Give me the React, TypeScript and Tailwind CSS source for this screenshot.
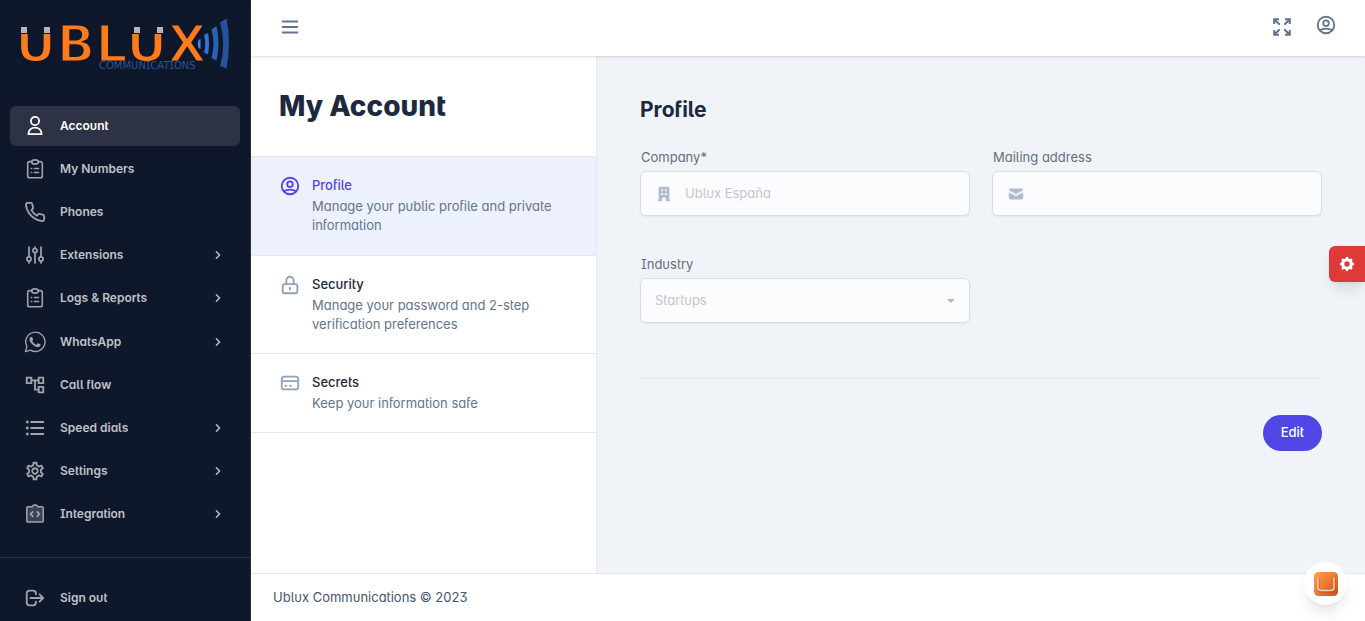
import React from 'react';
import {
    HiChevronRight,
    HiCog,
    HiMail,
    HiOfficeBuilding,
    HiOutlineCreditCard,
    HiOutlineLockClosed,
    HiOutlineLogout,
    HiOutlineMenu,
    HiOutlineUserCircle,
} from 'react-icons/hi';
import { MdOutlineAccountTree, MdOutlineSettings } from 'react-icons/md';
import { FiPhone } from 'react-icons/fi';

type IconType = React.ComponentType<{ className?: string }>;

interface NavItem {
    label: string;
    icon: IconType;
    hasChildren?: boolean;
    active?: boolean;
}

interface Section {
    title: string;
    description: string;
    icon: IconType;
    active?: boolean;
}

const PersonIcon: IconType = ({ className }) => <svg className={className} viewBox="0 0 22 22" fill="none" stroke="currentColor" strokeWidth="1.8" strokeLinejoin="round"><circle cx="11" cy="6" r="4.1" /><path d="M4.4 19.2c0-4.2 2.8-6.6 6.6-6.6s6.6 2.4 6.6 6.6z" /></svg>;
const ClipboardIcon: IconType = ({ className }) => <svg className={className} viewBox="0 0 22 22" fill="none" stroke="currentColor" strokeWidth="1.6" strokeLinecap="round" strokeLinejoin="round"><path d="M7.7 3.6H5.6a1.9 1.9 0 0 0-1.9 1.9v12.4a1.9 1.9 0 0 0 1.9 1.9h10.8a1.9 1.9 0 0 0 1.9-1.9V5.5a1.9 1.9 0 0 0-1.9-1.9h-2.1" /><ellipse cx="11" cy="4" rx="3.3" ry="2.1" /><path d="M10.5 10.5h4M10.5 14.5h4M7.3 10.5h.4M7.3 14.5h.4" /></svg>;
const SlidersIcon: IconType = ({ className }) => <svg className={className} viewBox="0 0 22 22" fill="none" stroke="currentColor" strokeWidth="1.7" strokeLinecap="round"><path d="M5 3v9.8M5 17v2M11 3v1.5M11 8.7V19M17 3v9.8M17 17v2" /><circle cx="5" cy="14.9" r="2.1" /><circle cx="11" cy="6.6" r="2.1" /><circle cx="17" cy="14.9" r="2.1" /></svg>;
const ListIcon: IconType = ({ className }) => <svg className={className} viewBox="0 0 22 22" fill="none" stroke="currentColor" strokeWidth="1.8"><path d="M6.5 5H20M6.5 11H20M6.5 17H20" /><path d="M2 5h2.6M2 11h2.6M2 17h2.6" strokeWidth="2.4" /></svg>;
const IntegrationIcon: IconType = ({ className }) => <svg className={className} viewBox="0 0 22 22" fill="none" stroke="currentColor" strokeWidth="1.5"><path d="M4 3.7h4.3a2.8 2.8 0 0 1 5.4 0H18a1.2 1.2 0 0 1 1.2 1.2v13a1.2 1.2 0 0 1-1.2 1.2H4a1.2 1.2 0 0 1-1.2-1.2v-13A1.2 1.2 0 0 1 4 3.7z" fill="currentColor" fillOpacity="0.3" /><path d="M9.3 8.3 6.5 11.1l2.8 2.8M12.7 8.3l2.8 2.8-2.8 2.8" strokeWidth="1.7" /></svg>;
const ExpandIcon: IconType = ({ className }) => <svg className={className} viewBox="0 0 18 18" fill="none" stroke="currentColor" strokeWidth="2"><path d="M1.2 6V1.2H6M1.5 1.5l5.2 5.2M12 1.2h4.8V6M16.5 1.5l-5.2 5.2M1.2 12v4.8H6M1.5 16.5l5.2-5.2M12 16.8h4.8V12M16.5 16.5l-5.2-5.2" /></svg>;
const WhatsAppIcon: IconType = ({ className }) => (
    <svg className={className} viewBox="0 0 16 16" fill="currentColor">
        <path d="M1 15l1.1-3.8A7 7 0 1 1 4.7 13.900z" fill="none" stroke="currentColor" strokeLinejoin="round" />
        <path d="M11.6 9.6c-.198-.1-1.17-.578-1.353-.646-.182-.065-.315-.099-.445.099-.133.197-.513.646-.627.775-.114.133-.232.148-.43.05-.197-.1-.836-.308-1.592-.985-.59-.525-.985-1.175-1.103-1.372-.114-.198-.011-.304.088-.403.087-.088.197-.232.296-.346.1-.114.133-.198.198-.33.065-.134.034-.248-.015-.347-.05-.099-.445-1.076-.612-1.47-.16-.389-.323-.335-.445-.34-.114-.007-.247-.007-.38-.007a.73.73 0 0 0-.529.247c-.182.198-.691.677-.691 1.654s.71 1.916.81 2.049c.098.133 1.394 2.132 3.383 2.992.47.205.84.326 1.129.418.475.152.904.129 1.246.08.38-.058 1.171-.48 1.338-.943.164-.464.164-.86.114-.943-.049-.084-.182-.133-.38-.232z" />
    </svg>
);

const NAV_ITEMS: NavItem[] = [
    { label: 'Account', icon: PersonIcon, active: true },
    { label: 'My Numbers', icon: ClipboardIcon },
    { label: 'Phones', icon: FiPhone },
    { label: 'Extensions', icon: SlidersIcon, hasChildren: true },
    { label: 'Logs & Reports', icon: ClipboardIcon, hasChildren: true },
    { label: 'WhatsApp', icon: WhatsAppIcon, hasChildren: true },
    { label: 'Call flow', icon: MdOutlineAccountTree },
    { label: 'Speed dials', icon: ListIcon, hasChildren: true },
    { label: 'Settings', icon: MdOutlineSettings, hasChildren: true },
    { label: 'Integration', icon: IntegrationIcon, hasChildren: true },
];

const SECTIONS: Section[] = [
    { title: 'Profile', description: 'Manage your public profile and private information', icon: HiOutlineUserCircle, active: true },
    { title: 'Security', description: 'Manage your password and 2-step verification preferences', icon: HiOutlineLockClosed },
    { title: 'Secrets', description: 'Keep your information safe', icon: HiOutlineCreditCard },
];

const Logo = () => (
    <svg className="h-[52px] w-[210px] overflow-visible" viewBox="0 0 210 52" role="img" aria-label="Ublux Communications">
        <text x="-5" y="44" fontSize="51" fontWeight="700" fill="#ff7a1a" stroke="#0f172a" strokeWidth="3" fontFamily="'DejaVu Sans', sans-serif">UBLUX</text>
        {/* silver tips on both U magnets */}
        <path d="M-2 4h35v12H-2zM111 4h35v12h-35z" fill="#0f172a" />
        <path d="M1 9h6v6H1zM24 9h6v6h-6zM114 9h6v6h-6zM137 9h6v6h-6z" fill="#b4b6ba" />
        <text x="79" y="51" fontSize="10" fill="#25559c" fontFamily="'DejaVu Sans', sans-serif">COMMUNICATIONS</text>
        <path d="M178.5 22q-1.5 4 0 8l2 1V21z" fill="#3b8cff" />
        <path d="M184 17q2.5 9 0 17.5l4 2q2-11 0-21.5z" fill="#2f75dc" />
        <path d="M191.5 11.5q4 14.5 0 28.5l5 2.5q4-17 0-34.5z" fill="#2a62b8" />
        <path d="M200 4.5q6.5 21.5 0 43.5l6.5 2.5q5-25.5 0-50z" fill="#24539b" />
    </svg>
);

const NavLink: React.FC<{ item: NavItem }> = ({ item }) => {
    const Icon = item.icon;
    return (
        <a
            href="#"
            className={`flex h-10 items-center rounded-md px-3.5 text-xs font-semibold ${item.active ? 'bg-[#2d3344] text-white' : 'text-[#bfc2c8]'}`}
        >
            <Icon className={`mr-3.5 size-[22px] shrink-0 ${item.active ? 'text-white' : 'text-[#a0a4ad]'}`} />
            <span className="flex-1">{item.label}</span>
            {item.hasChildren && <HiChevronRight className="size-4 text-[#b0b8c6]" />}
        </a>
    );
};

const Sidebar = () => (
    <aside className="flex w-[251px] shrink-0 flex-col border-r border-[#252c42] bg-[#0f172a]">
        <div className="px-5 pt-[18px] pb-9">
            <Logo />
        </div>
        <nav className="flex flex-1 flex-col justify-between px-2.5 pb-[23px]">
            {NAV_ITEMS.map((item) => <NavLink key={item.label} item={item} />)}
        </nav>
        <div className="border-t border-[#263042] px-2.5 pt-5 pb-[3px]">
            <NavLink item={{ label: 'Sign out', icon: HiOutlineLogout }} />
        </div>
    </aside>
);

const SectionList = () => (
    <section className="w-[346px] shrink-0 border-r border-slate-200 bg-white">
        <h1 className="flex h-[100px] items-center px-7 text-[28px] font-extrabold text-slate-800">My Account</h1>
        <ul className="border-t border-slate-200">
            {SECTIONS.map(({ title, description, icon: Icon, active }) => (
                <li key={title} className={`border-b border-slate-200 first:pb-px ${active ? 'bg-[#edf1fe]' : ''}`}>
                    <a href="#" className="flex gap-[11px] px-7 pt-[18px] pb-[19px]">
                        <Icon className={`size-[22px] shrink-0 ${active ? 'text-[#4f46e5]' : 'text-slate-400'}`} />
                        <span className="flex flex-col gap-0.5">
                            <span className={`leading-5 font-medium ${active ? 'text-[#4f46e5]' : 'text-slate-800'}`}>{title}</span>
                            <span className="leading-[19px] text-slate-500">{description}</span>
                        </span>
                    </a>
                </li>
            ))}
        </ul>
    </section>
);

interface TextFieldProps {
    id: string;
    label: string;
    value: string;
    icon: IconType;
}

const TextField: React.FC<TextFieldProps> = ({ id, label, value, icon: Icon }) => (
    <div className="flex flex-col gap-1">
        <label htmlFor={id} className="px-px leading-5 text-[#666d7a]">{label}</label>
        <div className="flex h-[45px] items-center gap-3 rounded-md border border-[#d5dee9] bg-[#fbfcfe] px-3.5 shadow-xs">
            <Icon className="size-[18px] shrink-0 text-[#b0bccd]" />
            <input id={id} type="text" defaultValue={value} disabled className="min-w-0 flex-1 bg-transparent text-[#c3c6ca]" />
        </div>
    </div>
);

const ProfileForm = () => (
    <form className="flex-1 bg-[#f0f4f9] px-[43px] pt-10">
        <h2 className="mb-[23px] text-[21px] leading-7 font-bold text-slate-800">Profile</h2>
        <div className="grid grid-cols-2 gap-x-[22px] gap-y-[38px]">
            <TextField id="company" label="Company*" value="Ublux España" icon={HiOfficeBuilding} />
            <TextField id="mailing-address" label="Mailing address" value="" icon={HiMail} />
            <div className="flex flex-col gap-1">
                <label htmlFor="industry" className="px-px leading-5 text-[#666d7a]">Industry</label>
                <div className="flex h-[45px] items-center rounded-md border border-[#d5dee9] bg-[#fbfcfe] px-3.5 shadow-xs">
                    <select id="industry" disabled className="flex-1 appearance-none bg-transparent text-[#c3c6ca] opacity-100">
                        <option>Startups</option>
                    </select>
                    <svg className="h-1 w-2" viewBox="0 0 8 4" fill="#b4b6b9"><path d="M0 0h8L4 4z" /></svg>
                </div>
            </div>
        </div>
        <div className="mt-[55px] flex justify-end border-t border-slate-200 pt-9">
            <button type="button" className="h-9 rounded-full bg-[#4f46e5] px-[18px] font-medium text-white">Edit</button>
        </div>
    </form>
);

export default function App() {
    return (
        <div className="flex min-h-screen font-[Inter,sans-serif] text-[13px] [font-feature-settings:'salt','cv11','cv05']">
            <Sidebar />
            <div className="flex min-w-0 flex-1 flex-col">
                <header className="z-10 flex h-14 items-center justify-between bg-white px-7 pb-0.5 text-slate-500 shadow-sm">
                    <button type="button" aria-label="Toggle navigation"><HiOutlineMenu className="size-[22px]" /></button>
                    <div className="flex items-center gap-6">
                        <button type="button" aria-label="Toggle fullscreen"><ExpandIcon className="size-[18px]" /></button>
                        <button type="button" aria-label="User menu" className="pb-1"><HiOutlineUserCircle className="size-[22px]" /></button>
                    </div>
                </header>
                <main className="flex flex-1">
                    <SectionList />
                    <ProfileForm />
                </main>
                <footer className="flex h-12 items-center border-t border-slate-200 bg-white px-[22px] text-slate-600">
                    Ublux Communications © 2023
                </footer>
            </div>
            <button
                type="button"
                aria-label="Theme settings"
                className="fixed top-[246px] right-0 flex size-9 items-center justify-center rounded-l-md bg-[#df3a3a] text-white shadow-lg"
            >
                <HiCog className="size-[18px]" />
            </button>
            <button
                type="button"
                aria-label="Open chat"
                className="fixed right-[18px] bottom-4 z-20 flex size-[43px] items-center justify-center rounded-full bg-white shadow-lg"
            >
                <svg className="size-6" viewBox="0 0 24 24">
                    <defs>
                        <linearGradient id="chat-bg" x1="0" y1="0" x2="1" y2="1">
                            <stop offset="0" stopColor="#f9a052" />
                            <stop offset="0.5" stopColor="#ee7a2e" />
                            <stop offset="1" stopColor="#c8481a" />
                        </linearGradient>
                    </defs>
                    <rect width="24" height="24" rx="4.5" fill="url(#chat-bg)" />
                    <path d="M4.5 6v10.5q0 3 3 3h10q3 0 3-3V6" fill="none" stroke="#a8401c" strokeOpacity="0.6" strokeWidth="2" />
                    <path d="M4 5.5v10q0 3 3 3h10q3 0 3-3v-10" fill="none" stroke="#e8d5d3" strokeWidth="1.5" />
                </svg>
            </button>
        </div>
    );
}
